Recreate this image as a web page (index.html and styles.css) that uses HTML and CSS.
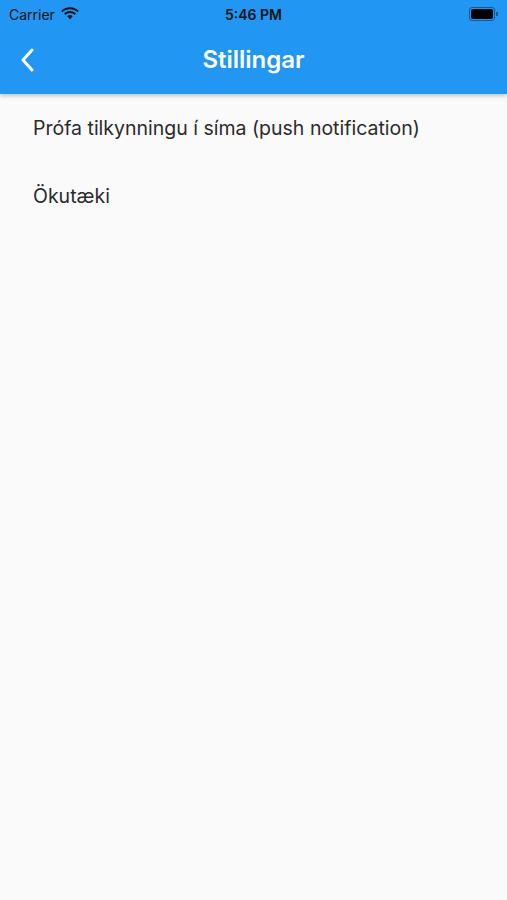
FILE: index.html
```html
<!DOCTYPE html>
<html lang="is">
<head>
    <meta charset="UTF-8">
    <meta name="viewport" content="width=device-width, initial-scale=1.0">
    <title>Stillingar</title>
    <link rel="stylesheet" href="styles.css">
</head>
<body>
    <div class="header">
        <div class="status-bar">
            <div class="status-left">
                <span>Carrier</span>
                <svg class="wifi" width="18" height="13" viewBox="0 0 18 13">
                    <path d="M9 2.2c2.9 0 5.5 1.1 7.5 3l1.3-1.4C15.5 1.6 12.4.3 9 .3S2.5 1.6.2 3.8l1.3 1.4c2-1.9 4.6-3 7.5-3z" fill="#111"/>
                    <path d="M9 6.1c1.8 0 3.4.7 4.6 1.8l1.3-1.4C13.4 5 11.3 4.1 9 4.1S4.6 5 3.1 6.5l1.3 1.4C5.6 6.8 7.2 6.1 9 6.1z" fill="#111"/>
                    <path d="M9 8.1c-1.1 0-2 .4-2.7 1.1L9 12.2l2.7-3C11 8.5 10.1 8.1 9 8.1z" fill="#111"/>
                </svg>
            </div>
            <div class="status-time">5:46 PM</div>
            <div class="status-right">
                <div class="battery"><div class="battery-fill"></div></div>
                <div class="battery-tip"></div>
            </div>
        </div>
        <div class="nav-bar">
            <svg class="back" width="14" height="24" viewBox="0 0 14 24">
                <path d="M12 2L3 12l9 10" fill="none" stroke="#fff" stroke-width="3" stroke-linecap="round" stroke-linejoin="round"/>
            </svg>
            <div class="title">Stillingar</div>
        </div>
    </div>

    <div class="list">
        <div class="list-item">Prófa tilkynningu í síma (push notification)</div>
        <div class="list-item">Ökutæki</div>
    </div>
</body>
</html>
```

FILE: styles.css
```css
body {
    margin: 0;
    background-color: #fafafa;
    font-family: Inter, Roboto, "Liberation Sans", Arial, sans-serif;
    height: 900px;
}
.header {
    background-color: #2196f3;
    box-shadow: 0 2px 4px rgba(0, 0, 0, 0.22);
    position: relative;
}
.status-bar {
    height: 25px;
    display: flex;
    align-items: center;
    justify-content: space-between;
    padding: 0 9px 0 9px;
    color: #111;
}
.status-left {
    display: flex;
    align-items: center;
    gap: 6px;
    font-size: 14px;
    width: 120px;
    margin-top: 3px;
}
.wifi {
    margin-top: -2px;
}
.status-time {
    font-size: 14px;
    font-weight: 600;
    margin-top: 3px;
}
.status-right {
    width: 120px;
    display: flex;
    justify-content: flex-end;
    align-items: center;
    margin-top: 3px;
}
.battery {
    width: 22px;
    height: 10px;
    border: 1px solid rgba(0, 0, 0, 0.4);
    border-radius: 3px;
    padding: 1px;
    box-sizing: content-box;
}
.battery-fill {
    width: 100%;
    height: 100%;
    background: #000;
    border-radius: 2px;
}
.battery-tip {
    width: 2px;
    height: 4px;
    background: rgba(0, 0, 0, 0.4);
    border-radius: 0 1px 1px 0;
    margin-left: 1px;
}
.nav-bar {
    height: 69px;
    display: flex;
    align-items: center;
    justify-content: center;
    position: relative;
}
.back {
    position: absolute;
    left: 20px;
    top: 23px;
}
.title {
    color: #fff;
    font-size: 24px;
    font-weight: 600;
}
.list-item {
    height: 68px;
    display: flex;
    align-items: center;
    padding-left: 33px;
    font-size: 19.5px;
    color: #2b2b2b;
}
```
